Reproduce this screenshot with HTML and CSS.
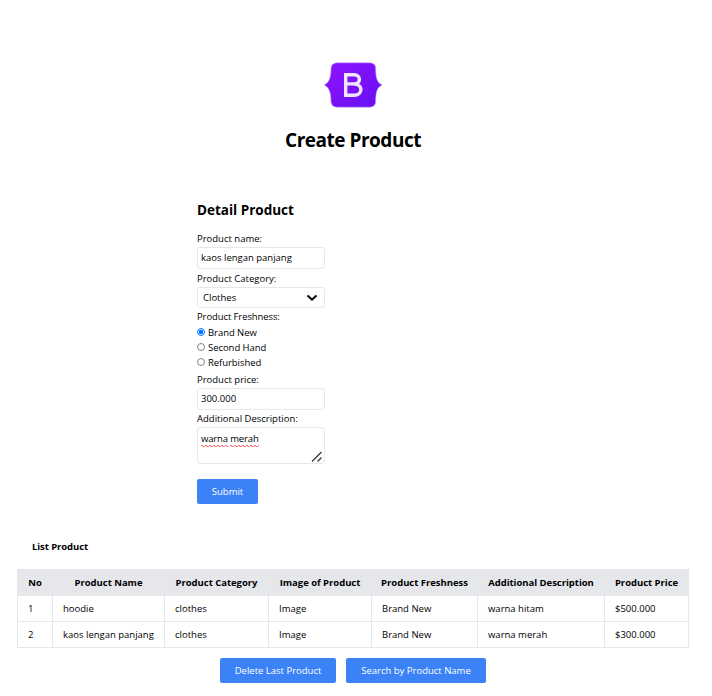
FILE: index.html
```html
<!DOCTYPE html>
<html lang="en">
<head>
<meta charset="utf-8">
<title>Create Product</title>
<link rel="stylesheet" href="styles.css">
</head>
<body>
<header class="hero">
  <svg class="logo" width="58" height="46" viewBox="0 0 58 46">
    <defs><linearGradient id="g" x1="0" y1="0" x2="1" y2="1"><stop offset="0" stop-color="#9013fe"/><stop offset="1" stop-color="#6610f2"/></linearGradient></defs>
    <path d="M13 .8H46Q51.200 1 51.700 6C51.700 14 52.500 20.500 57.500 22.500V23.500C52.500 25.500 51.700 32 51.700 40Q51.200 45 46 45.200H13Q7.500 45 7 40C7 32 5.500 25.500 .8 23.500V22.500C5.500 20.500 7 14 7 6Q7.500 1 13 .8Z" fill="url(#g)" stroke="#c9a5fb" stroke-width=".6"/>
    <path fill="none" stroke="#f1e5fc" stroke-width="3.400" d="M21.700 12.700H30C37.200 12.700 37.200 21.900 30 21.900H21.700M30 21.900C39.200 21.900 39.200 33.200 30 33.200H21.700V12.700" stroke-linecap="square"/>
  </svg>
  <h1>Create Product</h1>
</header>
<main>
  <form class="form">
    <h2>Detail Product</h2>
    <label class="label">Product name:</label>
    <div class="field name"><span>kaos lengan panjang</span></div>
    <label class="label category">Product Category:</label>
    <div class="field select"><span>Clothes</span><svg width="12" height="8" viewBox="0 0 12 8"><path d="M1.500 1.500 6 5.700 10.500 1.500" fill="none" stroke="#000" stroke-width="2"/></svg></div>
    <label class="label fresh">Product Freshness:</label>
    <label class="option"><i class="radio checked"></i><span>Brand New</span></label>
    <label class="option"><i class="radio"></i><span>Second Hand</span></label>
    <label class="option"><i class="radio"></i><span>Refurbished</span></label>
    <label class="label price">Product price:</label>
    <div class="field amount"><span>300.000</span></div>
    <label class="label extra">Additional Description:</label>
    <div class="field area"><span><u>warna</u> <u>merah</u></span><svg class="grip" width="12" height="12" viewBox="0 0 12 12"><path d="M1 10.500 10.500 1M6.500 10.500 10.500 6.500" stroke="#444" stroke-width="1.500"/></svg></div>
    <button type="button" class="btn submit">Submit</button>
  </form>
  <section class="list">
    <h3>List Product</h3>
    <table>
      <colgroup><col class="c1"><col class="c2"><col class="c3"><col class="c4"><col class="c5"><col class="c6"><col class="c7"></colgroup>
      <thead><tr><th>No</th><th>Product Name</th><th>Product Category</th><th>Image of Product</th><th>Product Freshness</th><th>Additional Description</th><th>Product Price</th></tr></thead>
      <tbody>
        <tr><td>1</td><td>hoodie</td><td>clothes</td><td>Image</td><td>Brand New</td><td>warna hitam</td><td>$500.000</td></tr>
        <tr><td>2</td><td>kaos lengan panjang</td><td>clothes</td><td>Image</td><td>Brand New</td><td>warna merah</td><td>$300.000</td></tr>
      </tbody>
    </table>
    <div class="actions"><button type="button" class="btn delete">Delete Last Product</button><button type="button" class="btn search">Search by Product Name</button></div>
  </section>
</main>
</body>
</html>
```
FILE: styles.css
```css
* { box-sizing: border-box; }
body { margin: 0; background: #fff; color: #000; font: 9.5px/14px "Open Sans", "Noto Sans", sans-serif; height: 696px; overflow: hidden; }
h1, h2, h3 { margin: 0; white-space: nowrap; }
.hero { display: flex; flex-direction: column; align-items: center; width: 706px; padding-top: 62px; }
.logo { display: block; }
h1 { margin-top: 18px; font-size: 19px; line-height: 28px; font-weight: 700; letter-spacing: -.48px; }
.form { display: flex; flex-direction: column; width: 128px; margin: 46px 0 0 197px; white-space: nowrap; }
h2 { font-size: 13.5px; line-height: 20px; margin-bottom: 12px; }
.label { height: 15px; }
.field { display: flex; align-items: center; border: 1px solid #e5e7eb; border-radius: 3px; padding: 0 3px; height: 22px; }
.category { margin-top: 3px; }
.select { height: 21px; padding: 0 6px 0 5px; justify-content: space-between; }
.fresh { margin-top: 2px; letter-spacing: -.1px; }
.option { display: flex; align-items: flex-start; gap: 3px; height: 15px; letter-spacing: -.05px; }
.option span { padding-top: 1px; }
.radio { width: 8px; height: 8px; margin-top: 3px; border: 1px solid #858585; border-radius: 50%; }
.checked { border-color: #0075ff; background: radial-gradient(circle, #0075ff 0 2px, #fff 2.6px); }
.price { margin-top: 3px; }
.extra { margin-top: 2px; }
.area { position: relative; height: 37px; align-items: flex-start; padding-top: 4px; letter-spacing: -.15px; }
.area u { text-decoration: none; padding-bottom: 2px; background: repeating-linear-gradient(90deg, #ff7a7a 0 2px, transparent 2px 4px) 0 calc(100% - 1px) / 100% 1px no-repeat, repeating-linear-gradient(90deg, transparent 0 1px, #ffb0b0 1px 2px, #ff7a7a 2px 4px) 0 100% / 100% 1px no-repeat; }
.grip { position: absolute; right: 1px; bottom: 0; }
.btn { border: 0; border-radius: 2px; background: #3b82f6; color: #fff; font: inherit; height: 25px; padding: 0; text-align: center; white-space: nowrap; }
.submit { width: 61px; margin-top: 15px; }
.list { margin: 36px 0 0 17px; width: 672px; }
h3 { font-size: 9.5px; line-height: 14px; margin-left: 15px; letter-spacing: -.08px; }
table { width: 672px; margin-top: 15px; border-collapse: collapse; table-layout: fixed; }
th, td { height: 26px; padding: 0 0 0 10px; border: 1px solid #e5e7eb; text-align: left; white-space: nowrap; line-height: 14px; }
th { background: #e5e7eb; padding: 0; text-align: center; letter-spacing: -.03px; }
.c1 { width: 35px; } .c2 { width: 112px; } .c3 { width: 104px; } .c4 { width: 103px; } .c5 { width: 106px; } .c6 { width: 127px; } .c7 { width: 84px; }
.actions { display: flex; gap: 10px; margin: 10px 0 0 203px; }
.delete { width: 116px; }
.search { width: 140px; }
```
